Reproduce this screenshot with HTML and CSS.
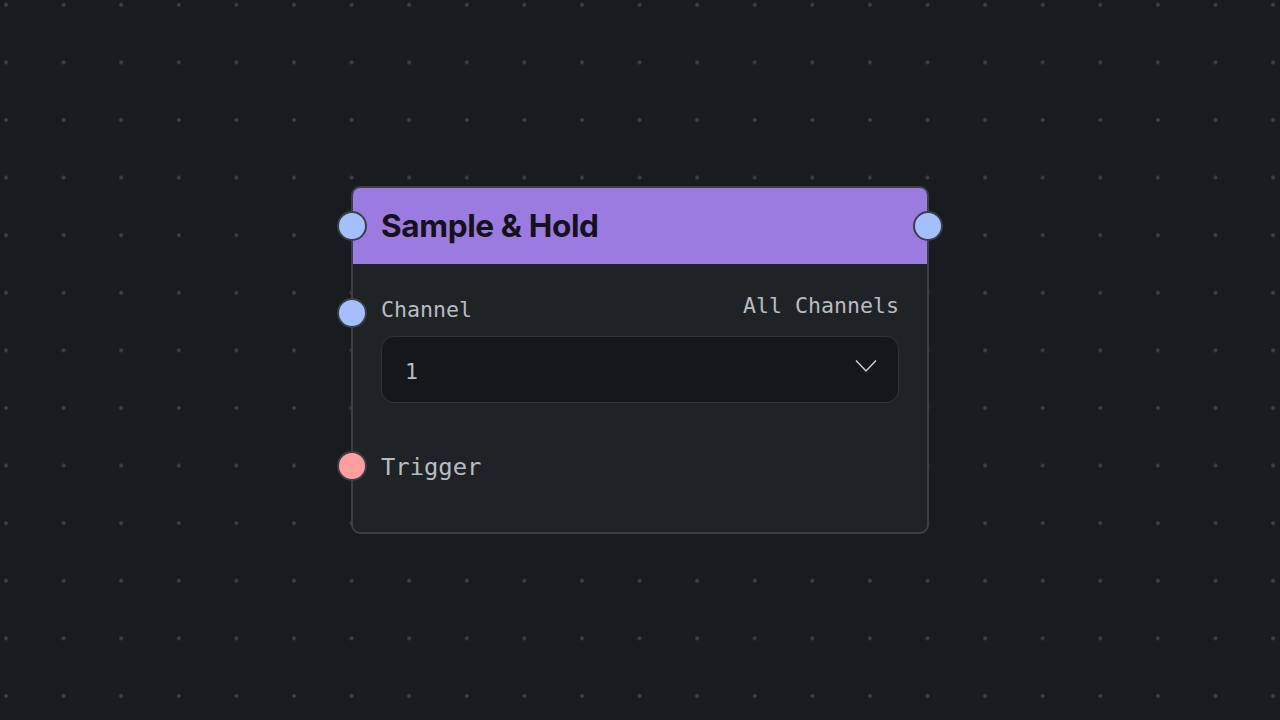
FILE: index.html
```html
<!DOCTYPE html>
<html lang="en">
<head>
    <meta charset="UTF-8">
    <title>Sample &amp; Hold</title>
    <link rel="stylesheet" href="styles.css">
</head>
<body>
<div class="canvas">
    <div class="node">
        <div class="node-head">
            <span class="handle in blue"></span>
            <h1>Sample &amp; Hold</h1>
            <span class="handle out blue"></span>
        </div>
        <div class="node-body">
            <div class="row">
                <span class="handle in blue"></span>
                <span class="label">Channel</span>
                <span class="label">All Channels</span>
            </div>
            <div class="select">
                <span>1</span>
                <svg width="22" height="14" viewBox="0 0 22 14"><path d="M1 1.5 L11 12 L21 1.5" fill="none" stroke="#c9cdd2" stroke-width="1.5"/></svg>
            </div>
            <div class="row trigger">
                <span class="handle in red"></span>
                <span class="label">Trigger</span>
            </div>
        </div>
    </div>
</div>
</body>
</html>
```

FILE: styles.css
```css
* {margin:0; padding:0; box-sizing:border-box;}
body {background:#191c1f; width:1280px; height:720px; overflow:hidden;}
.canvas {
    width:1280px; height:720px;
    background-image:radial-gradient(circle, #3b3e43 1.6px, transparent 2.2px);
    background-size:57.6px 57.6px;
    background-position:-22.8px -24px;
    padding-top:186px; padding-left:351px;
}
.node {width:578px; height:348px; background:#202326; border:2px solid #3c3f45; border-radius:9px; position:relative;}
.node-head {height:76px; background:#9b7be0; border-radius:7px 7px 0 0; display:flex; align-items:center; padding-left:28px; position:relative;}
.node-head h1 {font-family:Inter, sans-serif; font-weight:700; font-size:31.6px; color:#16121c; letter-spacing:-0.4px; margin-top:-1px;}
.handle {position:absolute; width:30px; height:30px; border-radius:50%; border:2px solid #3c3f45;}
.handle.blue {background:#a5befc;}
.handle.red {background:#ff9e9e;}
.handle.in {left:-16px;}
.handle.out {right:-16px;}
.node-head .handle {top:23px;}
.node-body {padding:25px 28px 0 28px;}
.row {display:flex; justify-content:space-between; align-items:center; position:relative; height:40px;}
.row .handle.in {left:-44px; top:9px;}
.row.trigger .handle.in {top:4px;}
.label {font-family:"DejaVu Sans Mono", monospace; font-size:21.6px; color:#b8bcc2;}
.row .label:first-of-type {margin-top:5px;}
.row .label + .label {margin-top:-7px;}
.trigger .label {font-size:23.8px;}
.select {margin-top:7px; height:67px; background:#15171a; border:1px solid #30333a; border-radius:13px; display:flex; align-items:center; justify-content:space-between; padding:0 21px 0 23px;}
.select span {font-family:"DejaVu Sans Mono", monospace; font-size:21.6px; color:#b8bcc2; margin-top:4px;}
.select svg {margin-top:-7px;}
.trigger {margin-top:44px;}
```
